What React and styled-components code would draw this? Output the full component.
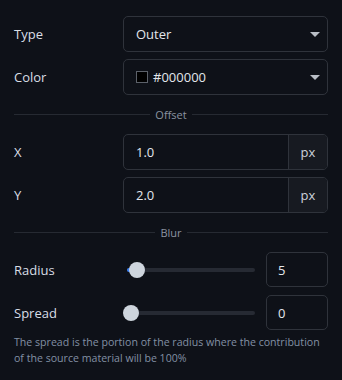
import React from "react";
import styled, { createGlobalStyle } from "styled-components";

const Global = createGlobalStyle`
  html, body { margin: 0; padding: 0; background: #0e1118; }
  body { font-family: "Open Sans", "Noto Sans", sans-serif; font-weight: 400; }
`;

const Panel = styled.div`
  width: 342px;
  height: 380px;
  box-sizing: border-box;
  padding: 16px 14px 0 14px;
  background: #0e1118;
  display: flex;
  flex-direction: column;
`;

const Row = styled.div`
  display: flex;
  align-items: center;
  height: ${(p) => p.$h || 36}px;
  margin-top: ${(p) => p.$mt || 0}px;
`;

const Label = styled.div`
  width: 109px;
  flex: none;
  font-size: 13px;
  color: #d9dee6;
`;

const Select = styled.div`
  flex: 1;
  height: 100%;
  box-sizing: border-box;
  border: 1px solid #2f333b;
  border-radius: 5px;
  display: flex;
  align-items: center;
  padding: 0 7px 0 12px;
  font-size: 13px;
  color: #e2e6ec;
  gap: 5px;
`;

const SelectText = styled.span`
  flex: 1;
`;

const Swatch = styled.span`
  width: 12px;
  height: 12px;
  box-sizing: border-box;
  background: ${(p) => p.$color};
  border: 1px solid #5c616a;
  flex: none;
`;

const Caret = () => (
  <svg width="10" height="5" viewBox="0 0 10 5" style={{ flex: "none" }}>
    <path d="M0 0 H10 L5 5 Z" fill="#b9bec6" />
  </svg>
);

const Divider = styled.div`
  display: flex;
  align-items: center;
  gap: 5px;
  height: 16px;
  margin: 11px 0 12px;
  font-size: 11px;
  color: #8b93a0;
  &::before, &::after {
    content: "";
    flex: 1;
    height: 1px;
    background: #262a32;
  }
`;

const InputGroup = styled.div`
  flex: 1;
  height: 100%;
  box-sizing: border-box;
  border: 1px solid #2f333b;
  border-radius: 5px;
  display: flex;
  overflow: hidden;
`;

const InputField = styled.div`
  flex: 1;
  display: flex;
  align-items: center;
  padding-left: 12px;
  font-size: 13px;
  color: #e2e6ec;
`;

const Addon = styled.div`
  width: 38px;
  flex: none;
  border-left: 1px solid #2f333b;
  background: #171a21;
  display: flex;
  align-items: center;
  justify-content: center;
  font-size: 13px;
  color: #cdd3dc;
`;

const SliderRoot = styled.div`
  flex: 1;
  position: relative;
  height: 16px;
  display: flex;
  align-items: center;
  margin-right: 11px;
`;

const Track = styled.div`
  flex: 1;
  height: 4px;
  margin-left: 4px;
  border-radius: 2px;
  background: #262a33;
`;

const Fill = styled.div`
  position: absolute;
  left: 4px;
  top: 6px;
  height: 4px;
  border-radius: 2px;
  background: #3b82f6;
`;

const Thumb = styled.div`
  position: absolute;
  top: 0;
  width: 16px;
  height: 16px;
  border-radius: 50%;
  background: #ced5dd;
`;

const NumberBox = styled.div`
  width: 62px;
  height: 100%;
  flex: none;
  box-sizing: border-box;
  border: 1px solid #2f333b;
  border-radius: 5px;
  display: flex;
  align-items: center;
  padding-left: 11px;
  font-size: 13px;
  color: #e2e6ec;
`;

const Help = styled.p`
  margin: 4px 0 0;
  font-size: 10.6px;
  line-height: 16px;
  color: #8290a4;
  white-space: nowrap;
`;

function Slider({ value, max }) {
  const left = (value / max) * (131 - 16);
  return (
    <SliderRoot>
      <Track />
      {value > 0 && <Fill style={{ width: left + 4 }} />}
      <Thumb style={{ left }} />
    </SliderRoot>
  );
}

export default function App() {
  return (
    <>
      <Global />
      <Panel>
        <Row>
          <Label>Type</Label>
          <Select>
            <SelectText>Outer</SelectText>
            <Caret />
          </Select>
        </Row>
        <Row $mt={7}>
          <Label>Color</Label>
          <Select>
            <Swatch $color="#000000" />
            <SelectText>#000000</SelectText>
            <Caret />
          </Select>
        </Row>
        <Divider>Offset</Divider>
        <Row>
          <Label>X</Label>
          <InputGroup>
            <InputField>1.0</InputField>
            <Addon>px</Addon>
          </InputGroup>
        </Row>
        <Row $mt={7}>
          <Label>Y</Label>
          <InputGroup>
            <InputField>2.0</InputField>
            <Addon>px</Addon>
          </InputGroup>
        </Row>
        <Divider>Blur</Divider>
        <Row $h={35}>
          <Label>Radius</Label>
          <Slider value={5} max={100} />
          <NumberBox>5</NumberBox>
        </Row>
        <Row $h={35} $mt={8}>
          <Label>Spread</Label>
          <Slider value={0} max={100} />
          <NumberBox>0</NumberBox>
        </Row>
        <Help>
          The spread is the portion of the radius where the contribution
          <br />
          of the source material will be 100%
        </Help>
      </Panel>
    </>
  );
}
